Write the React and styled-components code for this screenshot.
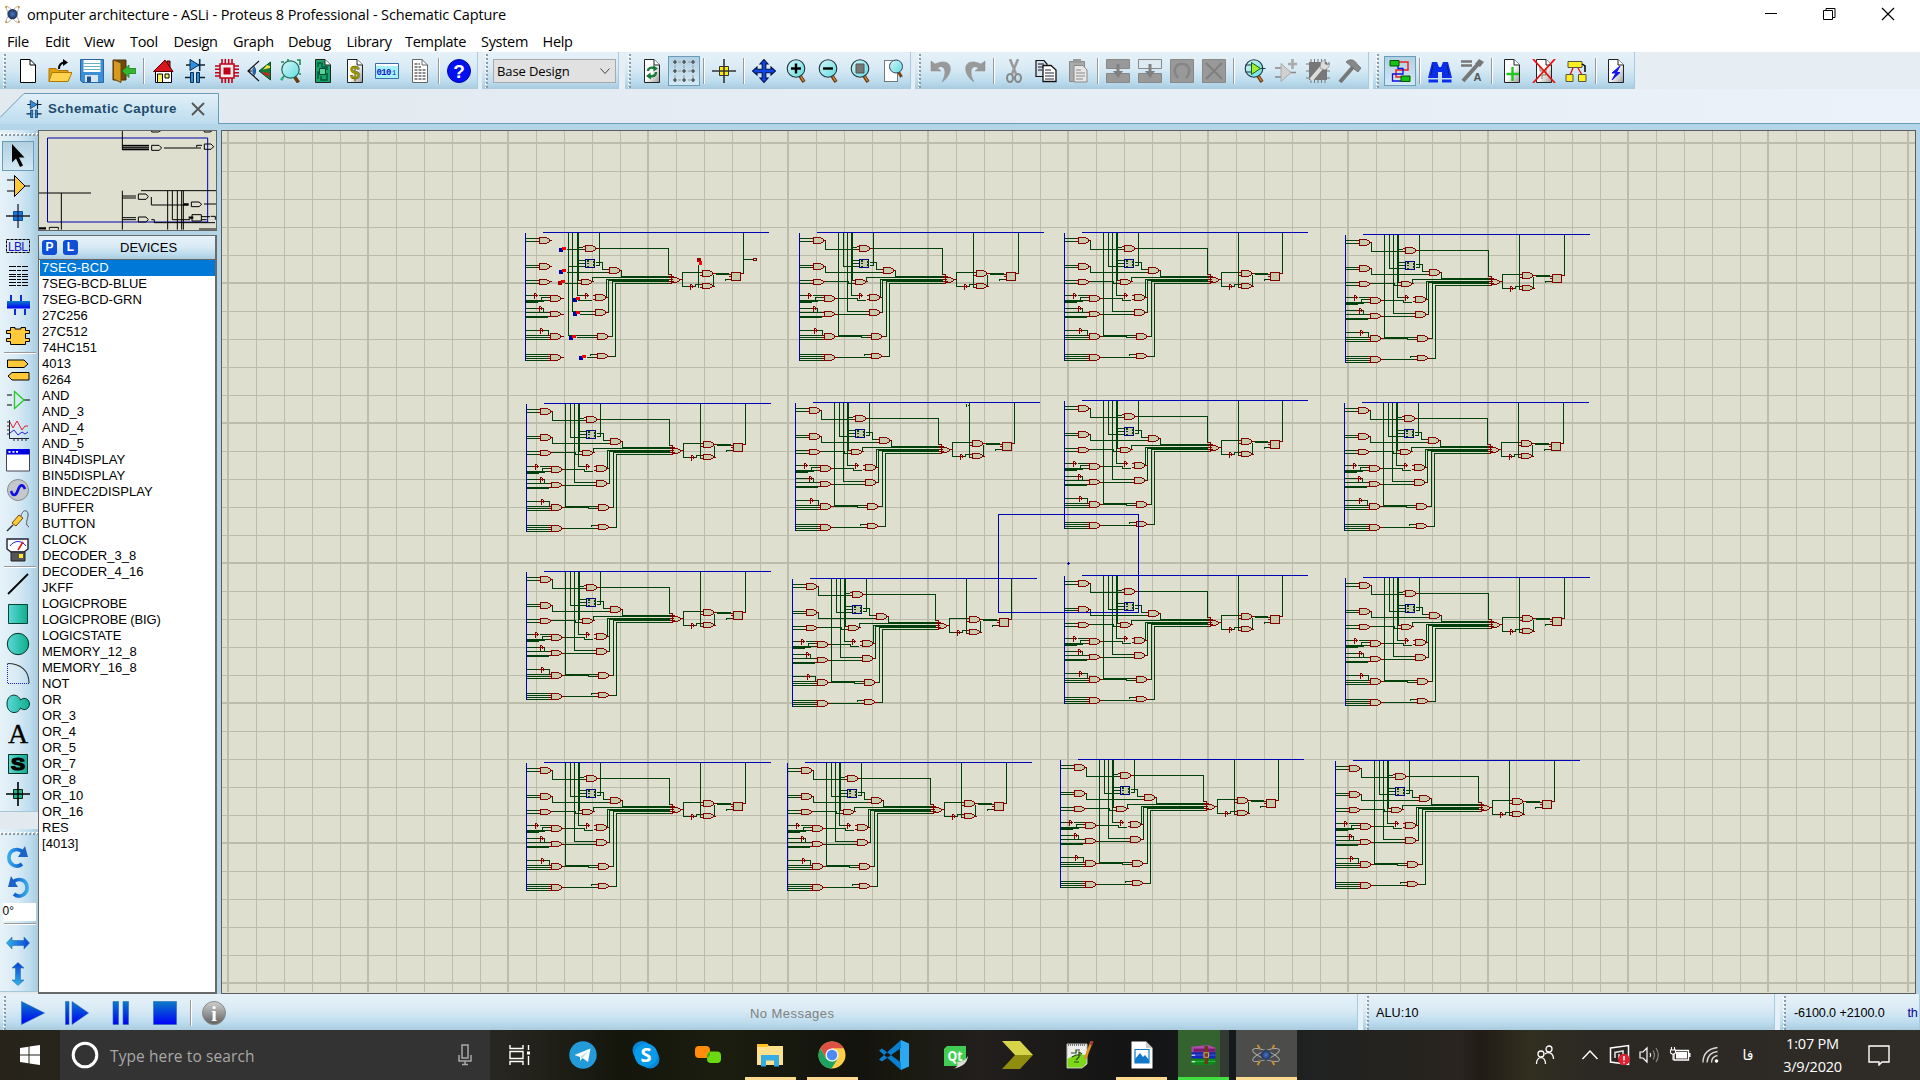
import React from 'react';
import styled, { createGlobalStyle, css } from 'styled-components';

const Global = createGlobalStyle`
  * { box-sizing: border-box; }
  body { margin: 0; background: #fff; overflow: hidden; }
  svg { display: block; flex: none; }
`;

const ui = `"Open Sans", "Noto Sans", sans-serif`;
const arial = `"Liberation Sans", Arial, sans-serif`;
const barFill = 'linear-gradient(#e6f2f8 0%, #d9eaf5 45%, #bcdcee 80%, #a9cbdd 100%)';

const Window = styled.div`
  width: 1920px;
  height: 1080px;
  display: flex;
  flex-direction: column;
  overflow: hidden;
  font-family: ${ui};
  color: #000;
  background: #fff;
`;

const TitleBar = styled.header`
  height: 28px;
  display: flex;
  align-items: center;
  padding: 0 4px 0 3px;
  gap: 5px;
`;
const Title = styled.div`
  flex: 1;
  font-size: 14.5px;
  letter-spacing: -0.13px;
  white-space: nowrap;
`;
const Controls = styled.div`
  display: flex;
  svg { width: 58px; height: 28px; }
`;

const MenuBar = styled.nav`
  height: 24px;
  display: flex;
  align-items: center;
  padding: 3px 0 0 7px;
  font-size: 14.5px;
  letter-spacing: -0.3px;
`;
const MenuItem = styled.span`
  width: ${(p) => p.$w}px;
  line-height: 20px;
`;

const ToolStrip = styled.div`
  height: 37px;
  display: flex;
  gap: 4px;
  background: #e6edf3;
`;
const Group = styled.div`
  width: ${(p) => p.$w}px;
  margin-right: ${(p) => p.$mr || 0}px;
  flex: none;
  display: flex;
  align-items: center;
  background: ${barFill};
  border-right: 1px solid #a5cbe0;
`;
const Handle = styled.i`
  width: ${(p) => p.$w || 12}px;
  height: 34px;
  flex: none;
  background:
    repeating-linear-gradient(#8d9ba5 0 2px, transparent 2px 4px) 4px 0 / 2px 100% no-repeat,
    repeating-linear-gradient(#fff 0 2px, transparent 2px 4px) 3px 1px / 2px 100% no-repeat;
`;
const ToolButton = styled.span`
  width: 32px;
  height: 30px;
  flex: none;
  display: flex;
  align-items: center;
  justify-content: center;
  ${(p) => p.$on && css`
    border: 1px solid #6a9db8;
    background: linear-gradient(#b2d0e2, #d3e8f4);
  `}
`;
const Sep = styled.i`
  width: ${(p) => p.$w || 8}px;
  height: 26px;
  flex: none;
  background:
    linear-gradient(#999, #999) 3px 0 / 1px 100% no-repeat,
    linear-gradient(#fff, #fff) 4px 0 / 1px 100% no-repeat;
`;
const Select = styled.div`
  width: 123px;
  height: 24px;
  border: 1px solid #a9a9a9;
  background: #e1e1e1;
  display: flex;
  align-items: center;
  justify-content: space-between;
  padding: 0 4px 0 3px;
  font-size: 13px;
  letter-spacing: -0.1px;
`;

const TabBar = styled.div`
  height: 35px;
  display: flex;
  align-items: flex-end;
  background: linear-gradient(90deg, #e2e9ef, #e6edf5 60%, #ebf2f9);
  border-bottom: 1px solid #6a9db8;
`;
const Tab = styled.div`
  position: relative;
  width: 219px;
  height: 31px;
  margin-bottom: -1px;
  display: flex;
  align-items: center;
  padding-left: 25px;
  gap: 5px;
  font: bold 13.3px ${arial};
  letter-spacing: 0.5px;
  color: #1f4c6b;
`;
const TabShape = styled.svg`
  position: absolute;
  left: 0;
  top: 0;
`;
const TabLabel = styled.span`
  position: relative;
  width: 138px;
  white-space: nowrap;
`;
const TabIcon = styled.span`
  position: relative;
`;

const Body = styled.main`
  flex: 1;
  min-height: 0;
  display: flex;
  background: #b4d5e8;
  padding-top: 6px;
`;
const LeftRail = styled.aside`
  width: 38px;
  flex: none;
  display: flex;
  flex-direction: column;
  background: #e2e9ef;
`;
const RailGroup = styled.div`
  height: ${(p) => p.$h}px;
  margin-bottom: ${(p) => p.$mb || 0}px;
  display: flex;
  flex-direction: column;
  align-items: center;
  background: linear-gradient(90deg, #e6f2f8 0%, #d9eaf5 45%, #bcdcee 80%, #a9cbdd 100%);
  border-bottom: 1px solid #a5c6d8;
`;
const RailHandle = styled.i`
  width: 38px;
  height: ${(p) => p.$h}px;
  flex: none;
  background:
    repeating-linear-gradient(90deg, #8d9ba5 0 2px, transparent 2px 4px) 1px 4px / 100% 2px no-repeat,
    repeating-linear-gradient(90deg, #fff 0 2px, transparent 2px 4px) 0 3px / 100% 2px no-repeat;
`;
const RailButton = styled.span`
  width: 32px;
  height: ${(p) => p.$h || 30}px;
  margin-right: 2px;
  flex: none;
  display: flex;
  align-items: center;
  justify-content: center;
  ${(p) => p.$on && css`
    border: 1px solid #6a9db8;
    background: linear-gradient(#b2d0e2, #d3e8f4);
  `}
`;
const RailLetter = styled.span`
  font: 28px/30px "Liberation Serif", serif;
  -webkit-text-stroke: 0.3px #000;
`;
const RailSep = styled.i`
  width: 32px;
  height: 4px;
  margin-left: 2px;
  flex: none;
  background: linear-gradient(#999 0 1px, #fff 1px 2px, transparent 2px) 0 1px no-repeat;
`;
const Angle = styled.div`
  width: 33px;
  height: 18px;
  margin: 1px 0;
  background: #fff;
  font: 12px/17px ${arial};
`;

const Side = styled.section`
  width: 179px;
  flex: none;
  display: flex;
  flex-direction: column;
  gap: 4px;
`;
const Overview = styled.div`
  height: 101px;
  background: #dfdfcf;
  border: 1px solid #646464;
  overflow: hidden;
`;
const Devices = styled.div`
  flex: 1;
  display: flex;
  flex-direction: column;
  background: #fff;
  border: 2px solid #6a6a6a;
  border-top-width: 1px;
  border-left-width: 1px;
`;
const DevHead = styled.div`
  height: 24px;
  display: flex;
  align-items: center;
  gap: 6px;
  padding-left: 3px;
  background: ${barFill};
  border-bottom: 1px solid #646464;
  font: 13px ${arial};
`;
const DevBadge = styled.b`
  width: 15px;
  height: 15px;
  border-radius: 3px;
  background: #0f4fd8;
  color: #fff;
  font: bold 12px/15px ${arial};
  text-align: center;
`;
const DevTitle = styled.span`
  flex: 1;
  padding-left: 36px;
`;
const DevList = styled.div`
  padding-left: 1px;
`;
const DevRow = styled.div`
  height: 16px;
  padding-left: 2px;
  font: 13px/16px ${arial};
  letter-spacing: ${(p) => (p.$long ? '-0.12px' : '0.02px')};
  white-space: nowrap;
  color: ${(p) => (p.$on ? '#fff' : '#000')};
  background: ${(p) => (p.$on ? '#0078d7' : 'transparent')};
`;

const Canvas = styled.section`
  width: 1695px;
  height: 864px;
  margin-left: 4px;
  flex: none;
  border: 1px solid #5d5d5d;
  background: #dfdfcf;
  overflow: hidden;
`;

const StatusBar = styled.footer`
  height: 36px;
  flex: none;
  display: flex;
  gap: 5px;
  background: #e6f0f6;
`;
const StatusPane = styled.div`
  width: ${(p) => p.$w}px;
  flex: none;
  display: flex;
  align-items: center;
  padding-top: 1px;
  background: ${barFill};
  border-right: 1px solid #a5cbe0;
  font: 12.6px ${arial};
  white-space: nowrap;
  overflow: hidden;
`;
const PlayButton = styled.span`
  width: 44px;
  display: flex;
  justify-content: center;
`;
const Message = styled.span`
  margin-left: ${(p) => p.$ml || 0}px;
  padding-top: 1px;
  color: ${(p) => p.$c || '#000'};
  font-size: ${(p) => p.$fs || 12.6}px;
  letter-spacing: ${(p) => p.$ls || 0}px;
`;

const TaskBar = styled.footer`
  height: 50px;
  flex: none;
  display: flex;
  background: linear-gradient(90deg, #27231a 0, #27251b 60px, #282620 500px, #14160c 620px, #1b1d0f 720px, #13130d 860px, #1a1a10 910px, #221f1d 980px, #141414 1120px, #15181a 1230px, #202221 1310px, #29241f 1460px, #211c15 1480px, #312f20 1530px, #2b2824 1600px, #302c28 1920px);
  color: #fff;
`;
const Start = styled.div`
  width: 60px;
  display: flex;
  align-items: center;
  justify-content: center;
`;
const Search = styled.div`
  width: 430px;
  display: flex;
  align-items: center;
  background: #333;
  padding: 0 18px 0 11px;
  font-size: 15.5px;
  letter-spacing: 0.1px;
  color: #a8a8a8;
`;
const SearchText = styled.span`
  flex: 1;
  padding: 1px 0 0 11px;
`;
const TaskItem = styled.div`
  position: relative;
  width: ${(p) => p.$w || 61.9}px;
  margin-left: ${(p) => p.$ml || 0}px;
  flex: none;
  display: flex;
  align-items: center;
  justify-content: center;
  background: ${(p) => p.$bg || 'transparent'};
  &::after {
    content: '';
    position: absolute;
    bottom: 0;
    left: ${(p) => (p.$full ? 0 : 5.5)}px;
    right: ${(p) => (p.$full ? 0 : 5.5)}px;
    height: 3px;
    background: ${(p) => p.$line || 'transparent'};
  }
`;
const Tray = styled.div`
  flex: 1;
  display: flex;
  align-items: center;
  padding-left: 233px;
`;
const TrayCell = styled.div`
  width: ${(p) => p.$w}px;
  flex: none;
  display: flex;
  justify-content: center;
  font: 14px "DejaVu Sans", sans-serif;
`;
const Clock = styled.div`
  width: 86px;
  text-align: center;
  font-size: 14.5px;
  line-height: 23px;
  letter-spacing: -0.2px;
`;
const HiddenDefs = styled.svg`
  position: absolute;
  width: 0;
  height: 0;
`;

/* ---------- icons ---------- */
const Svg = ({ s = 24, w, h, vb, children }) => (
  <svg width={w || s} height={h || s} viewBox={vb || '0 0 24 24'} fill="none">{children}</svg>
);
const PAGE = 'M4.5 .5H14L19.5 6V23.5H4.5Z';
const Page = ({ children, fill = 'url(#page)' }) => (
  <Svg><path d={PAGE} fill={fill} stroke="#222" /><path d="M14 .5V6H19.5" stroke="#222" fill="#fff" />{children}</Svg>
);
const Lens = ({ children }) => (
  <Svg>
    <g transform="translate(1.5 0)">
      <path d="M14 16L18.5 23" stroke="#6b3b10" strokeWidth="3.6" />
      <path d="M15 17L18 22" stroke="#e08a2c" strokeWidth="1.4" />
      <circle cx="10.5" cy="9.5" r="8.8" fill="url(#glass)" stroke="#234" strokeWidth="1.1" />
      {children}
    </g>
  </Svg>
);
const Parts = ({ s = 24 }) => (
  <Svg s={s}>
    <path d="M3 6H22M2 18.5H22" stroke="#123" strokeWidth="1.4" />
    <path d="M7 .5V11.5L16 6Z" fill="#2f8fe0" stroke="#0a2c50" />
    <path d="M16.7 0V12" stroke="#0a2c50" strokeWidth="1.6" />
    <path d="M7.5 13.5h3v10h-3zM13.5 13.5h3v10h-3z" fill="#2f8fe0" stroke="#0a2c50" />
    <path d="M11 14h2v9h-2z" fill="#cfe6f2" />
  </Svg>
);
const Atom = ({ s = 20, c = '#999' }) => (
  <Svg s={s}>
    <ellipse cx="12" cy="12" rx="13" ry="3.200" transform="rotate(52 12 12)" stroke={c} strokeWidth=".9" />
    <ellipse cx="12" cy="12" rx="13" ry="3.200" transform="rotate(-52 12 12)" stroke={c} strokeWidth=".9" />
    <circle cx="12" cy="11.500" r="6.500" fill="url(#atom)" />
    <circle cx="4" cy="2.500" r="1.300" fill="#c98d2b" /><circle cx="20" cy="2.500" r="1.300" fill="#c98d2b" />
    <circle cx="4" cy="21.500" r="1.300" fill="#c98d2b" /><circle cx="20" cy="21.500" r="1.300" fill="#c98d2b" />
  </Svg>
);
const AtomWide = () => (
  <Svg w={30} h={24} vb="0 0 32 26">
    <ellipse cx="16" cy="13" rx="15.500" ry="4.500" transform="rotate(22 16 13)" stroke="#aaa" strokeWidth="1.100" />
    <ellipse cx="16" cy="13" rx="15.500" ry="4.500" transform="rotate(-22 16 13)" stroke="#aaa" strokeWidth="1.100" />
    <circle cx="16" cy="13" r="5.500" fill="url(#atom)" />
    <path d="M7 2L9 6M25 2L23 6M7 24L9 20M25 24L23 20" stroke="#c98d2b" strokeWidth="2.200" />
  </Svg>
);

const NewFile = () => <Svg><path d={PAGE} fill="#fff" stroke="#000" /><path d="M14 .5V6H19.5" stroke="#000" /></Svg>;
const OpenFile = () => (
  <Svg><path d="M1 9.5H8L10 11.5H20V22.5H1Z" fill="#e0a010" stroke="#b07800" /><path d="M4 13.5H24L20 22.5H1Z" fill="#ffd34d" stroke="#b07800" />
    <path d="M11 10C11 5 13 3.500 17 3.500" stroke="#000" strokeWidth="2" /><path d="M15 0L20 3.500L15 7Z" fill="#000" /></Svg>
);
const Save = () => (
  <Svg><path d="M.5 .5H23.500V23.500H2.500L.5 21.500Z" fill="#3a8fd6" stroke="#2767a5" /><path d="M3.500 1H20.500V13H3.500Z" fill="#fff" />
    <path d="M3.500 4.500H20.500M3.500 7.500H20.500M3.500 10.500H20.500" stroke="#6bb2bc" /><path d="M5 16H18V23H5Z" fill="#d8e4ee" /><path d="M7 17.500H11V23H7Z" fill="#1d4f96" /></Svg>
);
const Exit = () => (
  <Svg><path d="M1 1H14V21H1Z" fill="#6b4a10" stroke="#4b3206" /><path d="M1.500 1L9 4V23.500L1.500 20Z" fill="#d9981e" stroke="#6b4706" />
    <path d="M10 12L17 6V9.500H24V14.500H17V18.500Z" fill="#35b733" stroke="#1d7d1c" strokeWidth=".8" /></Svg>
);
const Home = () => (
  <Svg><path d="M4.500 12H20.500V23.500H4.500Z" fill="#fff" stroke="#000" /><path d="M16 2H19V10H16Z" fill="#b22" stroke="#400" /><path d="M2.500 12.500L14 1L22 12.500Z" fill="#d8141c" stroke="#500" />
    <path d="M6.500 15H11.500V23.500H6.500Z" fill="#fff15a" stroke="#000" /><path d="M14 15H18V19H14Z" fill="#fff15a" stroke="#000" /></Svg>
);
const Pcb = () => (
  <Svg><path d="M7 0V24M10.300 0V24M13.700 0V24M17 0V24M0 7H24M0 10.300H24M0 13.700H24M0 17H24" stroke="#c00018" strokeWidth="1.6" />
    <path d="M5 5H19V19H5Z" fill="#f6eeee" stroke="#c00018" strokeWidth="1.500" /><path d="M8.500 8.500H15.500V15.500H8.500Z" fill="#c00018" /></Svg>
);
const Eye3d = () => (
  <Svg><path d="M12 2L1 12L12 22M1 12H5" stroke="#111" strokeWidth="1.200" /><path d="M6.500 7C9 10 9 14 6.500 17" fill="#3a8fd0" stroke="#111" />
    <ellipse cx="7" cy="12" rx="1.700" ry="3.500" fill="#2567b0" /><path d="M23.500 3V21L12 12Z" fill="#157a3a" stroke="#0a4a20" /><path d="M20 6L23 7V9L16 10.500Z" fill="#f4e13a" /><path d="M14 13L22 14V18Z" fill="#e01a1a" /></Svg>
);
const LensBoard = () => (
  <Svg><path d="M15 17L19.500 23.500" stroke="#6b3b10" strokeWidth="3.600" /><circle cx="11.500" cy="10.500" r="8.700" fill="url(#glass)" stroke="#1c6a56" strokeWidth="1.200" />
    <path d="M2 3H5M18 1H21V6M2 21L5 17M9 2V0M20 15H22" stroke="#1c8a56" strokeWidth="1.600" /><circle cx="3" cy="20" r="1.500" fill="#2b8" /></Svg>
);
const BoardPage = () => <Page fill="#18a463"><path d="M7 8V4H11V8H16V11M7 20V13H10M16 14V21H10V17" stroke="#054" strokeWidth="1.4" /><path d="M8.500 9.500H14.500V15.500H8.500Z" fill="#5bd29b" stroke="#043" /></Page>;
const Dollar = () => <Page><text x="12" y="20" fontSize="18" fontWeight="bold" textAnchor="middle" fill="#9a9a00" stroke="#555500" strokeWidth=".4" fontFamily="Liberation Sans">$</text></Page>;
const Binary = () => (
  <Svg><path d="M.5 4.500H23.500V19.500H.5Z" fill="#a6f2f6" stroke="#3a6ea8" /><path d="M1 5H23V7H1Z" fill="#fff" />
    <text x="1.500" y="15.500" fontSize="9" fontWeight="bold" fill="#1414d8" fontFamily="Liberation Mono" textLength="15">010</text><text x="17" y="15.500" fontSize="7" fill="#1414d8" fontFamily="Liberation Mono">1</text></Svg>
);
const TextPage = () => <Svg><g transform="translate(1 0)"><path d={PAGE} fill="#fff" stroke="#666" /><path d="M14 .5V6H19.500" stroke="#666" /><path d="M6.500 5H12M6.500 8H13M6.500 11H17.500M6.500 14H17.500M6.500 17H17.500M6.500 20H17.500" stroke="#666" strokeWidth="1.300" strokeDasharray="3 1" /></g></Svg>;
const Help = () => (
  <Svg><circle cx="12" cy="12" r="11.500" fill="#0010f0" stroke="#0008a0" /><text x="12" y="19" fontSize="19" fontWeight="bold" fill="#fff" textAnchor="middle" fontFamily="Liberation Sans">?</text></Svg>
);
const Refresh = () => <Page><path d="M8 12C8 9 11 8 14 9M16 13C16 17 12 18 9 17" stroke="#157a3a" strokeWidth="2.400" /><path d="M13 6L18 9.500L13.500 12.500ZM10.500 13.500L6 17L11 20.500Z" fill="#157a3a" /></Page>;
const GridIcon = () => (
  <Svg><path d="M1 3H23M1 12H23M1 21H23M3 1V23M12 1V23M21 1V23" stroke="#8c9aa4" strokeWidth="1" strokeDasharray="3 2" />
    {[3, 12, 21].map((x) => [3, 12, 21].map((y) => <path key={`${x}-${y}`} d={`M${x - 2} ${y}H${x + 2}M${x} ${y - 2}V${y + 2}`} stroke="#444" strokeWidth="1.200" />))}</Svg>
);
const Origin = () => <Svg><path d="M7.500 7.500H16.500V16.500H7.500Z" fill="#ffea00" stroke="#333" /><path d="M0 12H24M12 0V24" stroke="#333" strokeWidth="1.600" /></Svg>;
const Pan = () => <Svg><path d="M12 .5L16 5H13.800V10.200H19V8L23.500 12L19 16V13.800H13.800V19H16L12 23.500L8 19H10.200V13.800H5V16L.5 12L5 8V10.200H10.200V5H8Z" fill="#1245e8" stroke="#00104a" strokeWidth="1.100" /></Svg>;
const Plus = () => <Lens><path d="M10.500 4.500V14.500M5.500 9.500H15.500" stroke="#000" strokeWidth="2.400" /></Lens>;
const Minus = () => <Lens><path d="M5.500 9.500H15.500" stroke="#000" strokeWidth="2.400" /></Lens>;
const FitAll = () => <Lens><path d="M6.500 5H14.500V14H6.500Z" fill="#777" stroke="#555" /></Lens>;
const ZoomArea = () => (
  <Svg><g transform="translate(1 0)"><path d="M3.500 1.500H16.500V22.500H3.500Z" fill="#fff" stroke="#000" strokeDasharray="1 1" /><path d="M17.500 13L20.500 18" stroke="#7a4512" strokeWidth="3" /><circle cx="15" cy="7.500" r="6.500" fill="url(#glass)" stroke="#346" /></g></Svg>
);
const Undo = ({ flip }) => (
  <Svg><g transform={flip ? 'matrix(-1 0 0 1 24 0)' : ''}><path d="M1 2V12H11L7.500 9C14 4.500 18 12 12 23C25 14 23 -3 5 5Z" fill="#999" stroke="#888" strokeWidth=".5" /></g></Svg>
);
const Cut = () => <Svg><path d="M8 0L14 15M16 0L10 15" stroke="#9a9a9a" strokeWidth="2.500" /><ellipse cx="8" cy="19" rx="3" ry="4" stroke="#888" strokeWidth="2" /><ellipse cx="16" cy="19" rx="3" ry="4" stroke="#888" strokeWidth="2" /></Svg>;
const Copy = () => (
  <Svg><path d="M2 1.500H10L13 5V17.500H2Z" fill="#d7e3ec" stroke="#111" strokeWidth="1.200" /><path d="M4 5H10M4 8H10M4 11H8" stroke="#112" /><path d="M9 6.500H17L22 11V22.500H9Z" fill="#fff" stroke="#111" strokeWidth="1.300" /><path d="M11 11H17M11 14H20M11 17H20M11 20H20" stroke="#223" /></Svg>
);
const Paste = () => (
  <Svg><path d="M3.500 2.500H18.500V22.500H3.500Z" fill="#aaa" stroke="#888" /><path d="M7 0H15V4H7Z" fill="#999" /><path d="M8 6.500H17L21 11V23H8Z" fill="#e6e6e6" stroke="#888" /><path d="M10 11H15M10 14H19M10 17H19M10 20H17" stroke="#888" /></Svg>
);
const BlockOp = ({ k }) => (
  <Svg>
    {k < 2 && <><path d="M.5 .5H23.500V9.500H.5Z" fill={k === 0 ? '#999' : '#ddeaf2'} stroke="#888" /><path d="M.5 14.500H23.500V23.500H.5Z" fill="#999" stroke="#888" /><path d="M12 5V14" stroke="#808080" strokeWidth="3" /><path d="M7 12H17L12 19Z" fill="#808080" /></>}
    {k > 1 && <path d="M.5 .5H23.500V23.500H.5Z" fill="#999" stroke="#888" />}
    {k === 2 && <path d="M8 19C2 12 5 5 12 5C19 5 22 12 16 19" stroke="#858585" strokeWidth="2.500" />}
    {k === 3 && <path d="M4 4L20 20M20 4L4 20" stroke="#808080" strokeWidth="2.200" />}
  </Svg>
);
const PickLens = () => <Lens><path d="M2 6H8M2 13H8M15 9.500H22" stroke="#235" /><path d="M8 3.500V15.500L17 9.500Z" fill="#9fee30" stroke="#165a16" /></Lens>;
const MakeDev = () => <Svg><path d="M1 9H7M1 18H7M16 13.500H22" stroke="#888" strokeWidth="1.600" /><path d="M7 4.500V22.500L17 13.500Z" fill="#d0d0d0" stroke="#aaa" /><path d="M18.500 0V10M14 5H23" stroke="#aaa" strokeWidth="2.600" /></Svg>;
const Packaging = () => (
  <Svg><path d="M3 3H21V21H3Z" fill="#777" /><path d="M5 0V24M8.500 0V24M12 0V24M15.500 0V24M19 0V24M0 5H24M0 12H24M0 19H24" stroke="#777" strokeDasharray="3 18" /><path d="M5 21L16 8" stroke="#ddd" strokeWidth="4" /><path d="M14 9L15 3L19 1V5L22 6L23 3V8L19 11Z" fill="#ddd" stroke="#888" strokeWidth=".6" /></Svg>
);
const Hammer = () => <Svg><path d="M2 23L15 8" stroke="#777" strokeWidth="4" /><path d="M8 3C12 -1 17 1 19 5L23 9L20 13L16 10L14 8Z" fill="#888" stroke="#666" strokeWidth=".7" /></Svg>;
const WireAuto = () => (
  <Svg><path d="M11 3H20V11H8V18H13" stroke="#f02020" strokeWidth="1.500" /><path d="M10 6V9.500H15V15H4.500V22H13" stroke="#1010e0" strokeWidth="1.300" /><path d="M2 1.500H11V7H2ZM13 17H22V22.500H13Z" fill="#14c414" stroke="#065006" /></Svg>
);
const Binoc = () => <Svg><path d="M4 3H9L11 8H13L15 3H20L24 19H14V13H10V19H0Z" fill="#0b2fe8" /><path d="M.5 20.500H10V23.500H.5ZM14 20.500H23.500V23.500H14Z" fill="#0b2fe8" /><path d="M5 6L3 16M19 6L21 16" stroke="#0a1a90" /></Svg>;
const PropTool = () => <Svg><path d="M1 2.500H12M1 6.500H12" stroke="#777" strokeWidth="2.500" /><path d="M3 22L19 4" stroke="#777" strokeWidth="4" /><path d="M15 5L19 0L24 3L20 8Z" fill="#777" /><text x="17.500" y="21.500" fontSize="11" fontWeight="bold" fill="#555" textAnchor="middle" fontFamily="Liberation Sans">A</text></Svg>;
const AddSheet = () => <Page><path d="M12.500 8V22M6.500 15H19" stroke="#1fc81f" strokeWidth="2.400" /></Page>;
const DelSheet = () => <Page><path d="M8 8V12H12M14 9V16H10V20" stroke="#686" /><path d="M1 0L23 24M23 0L1 24" stroke="#e81010" strokeWidth="1.800" /></Page>;
const ChildSheet = () => (
  <Svg><path d="M9 9L6 16M14 9L18 16" stroke="#e81010" strokeWidth="1.400" /><path d="M4 2.500H18V8.500H4ZM2 15.500H9V22.500H2ZM14.500 15.500H22V22.500H14.500Z" fill="#ffee20" stroke="#554" /><path d="M18 5L21 7V13" stroke="#000" strokeWidth="1.500" /></Svg>
);
const Erc = () => <Page><path d="M16 7L8 14H12L8 21L16 13.500H12.500Z" fill="#1212e8" stroke="#1212e8" /></Page>;

/* left rail */
const rail1 = [
  <Svg><path d="M6 0V18.500L10 14.500L14 23L17 21.500L13 13.500H18.500Z" fill="#000" /></Svg>,
  <Svg><path d="M1 6H8M1 17H8M19 12H24" stroke="#000" /><path d="M8.500 1.500V22.500L19 12Z" fill="#ffc93a" stroke="#000" /></Svg>,
  <Svg><path d="M7.500 7.500H16.500V16.500H7.500Z" fill="#1279e0" stroke="#0a4fa0" /><path d="M0 12H24M12 0V24" stroke="#223" strokeWidth="1.300" /></Svg>,
  <Svg><path d="M.5 5.500H23.500V18.500H.5Z" stroke="#000" strokeDasharray="3 1" /><text x="2" y="16.500" fontSize="12" fill="#1414b8" fontFamily="Liberation Sans" textLength="20">LBL</text></Svg>,
  <Svg><path d="M3 2.500H22M3 6.500H22M3 10.500H22M3 12.500H22M3 15.500H22M3 18.500H22M3 21.500H22" stroke="#000" strokeWidth="1.100" strokeDasharray="7 1 4 1" /></Svg>,
  <Svg><path d="M5 1V7M15 1V7M9 15V21M19 15V21" stroke="#0a2fd0" strokeWidth="2" /><path d="M1 7H24V14.500H1Z" fill="url(#blue)" /></Svg>,
  <Svg><path d="M4.500 3.500H9V5H15V3.500H19.500V6.500H23.500V9.500H19.500V14.500H23.500V17.500H19.500V20.500H4.500V17.500H.5V14.500H4.500V9.500H.5V6.500H4.500Z" fill="#ffc93a" stroke="#000" /></Svg>,
];
const rail2 = [
  <Svg><path d="M1.500 2H18L22 6L18 9.500H1.500ZM23 14.500H6L2 18L6 22H23Z" fill="#ffc93a" stroke="#000" /></Svg>,
  <Svg><path d="M1 7H6M1 17H6M18 12H24" stroke="#000" /><path d="M8.500 3.500V20.500L18 12Z" stroke="#22cc22" strokeWidth="1.300" /></Svg>,
  <Svg><path d="M3.500 2V20.500H23M1 4H3M1 8H3M1 12H3M1 16H3M8 20V23M12 20V23M16 20V23M20 20V23" stroke="#223" /><path d="M4 4L7 10L11 3L16 12L19 8L22 8" stroke="#e02020" /><path d="M4 15L8 12L12 17L16 14L19 16L22 14" stroke="#2020d0" /></Svg>,
  <Svg><path d="M.5 1.500H23.500V23H.5Z" fill="#fff" stroke="#445" /><path d="M1 1H23.500V6.500H1Z" fill="#0000e8" /><path d="M2.500 3.800H4.500M6.500 3.800H8.500M10 3.800H12" stroke="#fff" strokeWidth="1.800" /></Svg>,
  <Svg><circle cx="12" cy="12" r="10.500" fill="#c4c8cc" stroke="#888" /><path d="M5 13C7 19 10 18 12 12C14 6 17 6 19 11" stroke="#1010e0" strokeWidth="2.600" /></Svg>,
  <Svg><path d="M1 23L7 17" stroke="#333" strokeWidth="1.500" /><path d="M6 15L13 7L17 10L10 18Z" fill="#ffc93a" stroke="#6b4a06" /><path d="M15 8C17 0 23 2 22 8C21 13 19 17 23 19" stroke="#555" /></Svg>,
  <Svg><path d="M1 1H22V11L18 14H5L1 11Z" fill="#fff" stroke="#223" strokeWidth="1.400" /><path d="M4 8C8 2 16 2 20 8" stroke="#2020d0" /><path d="M12 12L17 4" stroke="#e01010" strokeWidth="1.500" /><path d="M5 14H19V23H5Z" fill="#555" stroke="#222" /><path d="M13 16H17V20H13Z" fill="#ffe63a" /></Svg>,
];
const rail3 = [
  <Svg><path d="M2 22L22 2" stroke="#000" strokeWidth="1.800" /></Svg>,
  <Svg><path d="M2.500 2.500H21.500V21.500H2.500Z" fill="url(#teal)" stroke="#043" /></Svg>,
  <Svg><circle cx="12" cy="12" r="10.700" fill="url(#teal)" stroke="#032" /></Svg>,
  <Svg><path d="M1.500 2V21.500H23" stroke="#2020d0" strokeDasharray="1 1" /><path d="M1.500 1.500C14 1.500 23 8 23 21" stroke="#333" strokeWidth="1.200" /></Svg>,
  <Svg><path d="M14.500 8C12 1 1 1 1 12C1 22 12 23 14.500 16C19 20 23.500 16 23.500 12C23.500 8 19 4 14.500 8Z" fill="url(#teal)" stroke="#032" /></Svg>,
  <RailLetter>A</RailLetter>,
  <Svg><path d="M2.500 2.500H21.500V21.500H2.500Z" fill="url(#teal)" stroke="#032" /><text x="12" y="18" fontSize="16" fontWeight="bold" fill="#000" stroke="#000" strokeWidth="1.200" textAnchor="middle" textLength="14" lengthAdjust="spacingAndGlyphs" fontFamily="Liberation Sans">S</text></Svg>,
  <Svg><path d="M7.500 7.500H16.500V16.500H7.500Z" fill="#1bb58f" stroke="#021" /><path d="M0 12H24M12 0V24" stroke="#000" strokeWidth="1.600" /></Svg>,
];
const RotCw = ({ flip }) => <Svg><g transform={flip ? 'matrix(-1 0 0 1 24 0)' : ''}><path d="M16 19C10 24 2.500 19 3 12C3.500 5 11 2 17 7" stroke="url(#blue2)" strokeWidth="3.600" /><path d="M19 1L22 12H12Z" fill="#1a62c8" /></g></Svg>;
const ARROWS = 'M.5 12L6 6V9.500H18V6L23.500 12L18 18V14.500H6V18Z';
const FlipH = () => <Svg><path d={ARROWS} fill="url(#blueH)" stroke="#2570b0" strokeWidth=".6" /></Svg>;
const FlipV = () => <Svg><g transform="rotate(-90 12 12)"><path d={ARROWS} fill="url(#blueH)" stroke="#2570b0" strokeWidth=".6" /></g></Svg>;

/* ---------- schematic ---------- */
const GREEN = '#00400a';
const RED = '#800000';
const gate = (x, y, w, h) => `M${x} ${y}h${w - 3}l3 2v${h - 4}l-3 2h-${w - 3}z`;
const GATES = [
  [14, 5, 10, 6], [14, 31, 10, 6], [14, 47, 10, 5], [25, 63, 10, 6], [25, 79, 10, 5], [25, 101, 10, 6], [25, 122, 10, 6],
  [60, 13, 10, 6], [84, 35, 10, 6], [56, 47, 10, 5], [70, 62, 10, 6], [70, 77, 10, 6], [72, 101, 10, 6], [72, 121, 10, 5],
  [146, 45, 8, 5], [177, 38, 10, 6], [177, 51, 10, 5],
].map((g) => gate(...g)).join('');
const buffer = (x, y) => `M${x} ${y - 3}v6M${x + 1} ${y - 2}l2 2l-2 2M${x - 3} ${y}h6`;
const PINS = [
  'M11 6h3M11 9h3M24 8h2M11 33h3M11 35h3M24 34h2M11 48h3M11 51h3M24 49h2',
  'M22 63h3M22 65h3M22 68h3M35 66h3M22 80h3M22 84h3M35 82h3M22 103h3M22 105h3M22 107h3M35 104h3',
  'M22 122h3M22 124h3M22 126h3M22 128h3M35 125h3M57 14h3M57 17h3M70 16h3M81 37h3M81 40h3M94 38h2',
  'M53 48h3M53 51h3M66 49h2M67 63h3M67 67h3M67 79h3M67 82h3M69 103h3M69 105h3M69 122h3M69 125h3M80 65h2M80 80h2M82 104h3M82 124h3',
  'M143 42h3v9h-3M143 44h5M143 45h5M143 47h4M143 49h5M154 47h3M174 40h3M174 43h3M187 41h3M174 52h3M174 55h3M187 54h2',
  buffer(9, 63), buffer(14, 76), buffer(15, 98), buffer(60, 63), buffer(165, 54),
].join('');
const COMMON = [
  'M0 6h11M0 9h11M0 33h11M0 35h11M0 48h11M0 51h11',
  'M0 63h7M13 63h9M16 68v-3h6M0 68h22M0 69h18M0 70h12',
  'M0 76h11M17 76h1v4h4M0 80h22M0 84h22M0 85h22M0 98h12M18 98h5v4',
  'M0 103h22M0 105h22M0 107h22M0 122h22M0 124h22M0 126h22M0 128h22',
  'M73 16h70v26M70 30h7v7h5M70 33h4v-33M96 38v6h47M96 45h47M67 49v-4h76',
  'M81 65v-18h62M82 80h1v-32h60M85 104h2v-55h56M85 124h5v-73h53',
  'M157 47v-7h17M157 47v7h5M168 54h2v-2h4M188 54v-12',
  'M53 28h7M53 31h7M53 15h4M65 123v-1h4',
].join('');
const LINKS = [
  'M26 8v9h31M26 34v6h55M26 49h23v2h4M38 66h20v2h8v-1M38 82h29M38 104h24v1h7M38 125h31',
  'M39 0v103h30M44 0v34h16M48 0v79h19M52 0v63h6M53 0v48M174 0v55',
].join('');
const OPEN_LINKS = [
  'M41 17h16M41 40h40M39 51h14M52 68h14v-1M54 82h13M51 105h18M61 125h8',
  'M43 0v103h26M43 34h17M47 0v79h20M53 0v48M52 0v63h6M173 32v23M218 27h10',
].join('');
const IC_PINS = 'M61 28h2v1h-2M61 31h2M61 34h2v-1M67 29h2v1h-2M67 32h2v1h-2';
const STATES = [[34, 16], [34, 38], [33, 49, 1], [48, 66], [48, 80], [44, 104], [54, 124]];

const Circuit = ({ x, y, open, narrow }) => {
  const r = narrow ? -1 : 0;
  return (
    <g transform={`translate(${x + 0.5} ${y + 0.5})`} fill="none">
      <path d={COMMON + (open ? OPEN_LINKS : LINKS)} stroke={GREEN} />
      <path d={`M190 41H${204 + r}M190 42H${204 + r}M200 48v-1h${4 + r}M${219 + r} 40V0`} stroke={GREEN} />
      <path d={`M0 0V128M17 0H${244.5 + r}`} stroke="#0000b4" />
      <path d={`${GATES}M${207 + r} 40h9v8h-9z`} stroke={RED} fill="#c9c9ab" />
      <path d={`${PINS}M${204 + r} 42h3M${204 + r} 44h3M${204 + r} 47h3M${216 + r} 41h3v-1`} stroke={RED} />
      <path d="M60 27h9v8h-9z" stroke="#000080" fill="#c9c9ab" />
      <path d={IC_PINS} stroke={GREEN} />
      {open && STATES.map(([sx, sy, dark]) => (
        <g key={sy}>
          <path d={`M${sx - 0.5} ${sy - 0.5}h4v4h-4z`} fill={dark ? '#a00000' : '#0000a8'} />
          <path d={`M${sx + 2.5} ${sy - 1.5}h4v3h-4z`} fill="#f00000" />
        </g>
      ))}
      {open && <><path d="M171.500 25.500h4v4h-4z" fill="#a00000" /><path d="M173.500 28.500h3v4h-3z" fill="#f00" /><path d="M228 26h3v2h-3z" stroke={RED} /></>}
    </g>
  );
};

const BLOCKS = [
  [525, 232, 1], [799, 232], [1064, 232, 1], [1345, 234],
  [526, 403], [795, 402], [1064, 400, 1], [1344, 402],
  [526, 571], [792, 578], [1064, 575, 1], [1345, 577],
  [526, 762], [787, 762], [1060, 759, 1], [1335, 760],
];

const gridPaths = () => {
  let minor = '';
  let major = '';
  for (let i = 0, x = 228; x < 1916; x += 28, i += 1) {
    if (i % 5 === 0) major += `M${x} 131V992`;
    else minor += `M${x + 0.5} 131V992`;
  }
  for (let i = 0, y = 143; y < 992; y += 28, i += 1) {
    if (i % 5 === 0) major += `M222 ${y}H1916`;
    else minor += `M222 ${y + 0.5}H1916`;
  }
  return [minor, major];
};
const [MINOR, MAJOR] = gridPaths();

const Schematic = () => (
  <svg width="1693" height="862" viewBox="222 131 1693 862" shapeRendering="crispEdges" fill="none">
    <path d={MINOR} stroke="#bcbcad" />
    <path d={MAJOR} stroke="#bcbcad" strokeWidth="2" />
    {BLOCKS.map(([x, y, narrow], i) => <Circuit key={i} x={x} y={y} narrow={narrow} open={i === 0} />)}
    <path d="M998.500 514.500H1138.500V612.500H998.500Z" stroke="#0000b4" />
    <path d="M1068.500 562V565M1067 563.500H1070" stroke="#0000a0" />
    <path d="M966.500 404V407M967.500 405.500H969" stroke={GREEN} />
  </svg>
);

const Preview = () => (
  <svg width="177" height="99" viewBox="117 34 531 297" fill="none">
    <path d="M142.500 55H623V307H142.500Z" stroke="#0000b4" strokeWidth="3" />
    <g stroke="#000" strokeWidth="3">
      <path d="M367 31V90M367 84H447M367 90H447M492 85H603M590 83V77H606M117 220H273M184 220V330M367 213V330M367 229H408M367 235H408M423 213H648M454 232V256H565M612 253H648M503 213V330M517 213V300H570M532 213V330M545 213V330M550 213V330M367 294H408M367 300H408M454 300H463V309H645M597 328H648" />
      <path d="M367 78H447" strokeWidth="5" /><path d="M367 89H447" strokeWidth="5" />
      <path d="M455 77H477L485 85L477 92H455ZM613 73H633L641 81L633 89H613ZM415 223H438L445 231L438 239H415ZM574 247H597L605 254L597 261H574ZM415 292H438L445 300L438 307H415ZM455 31V37H475L484 32M613 31V37H630L638 32M576 285H604V304H576ZM148 330V323H175V330M604 291H630M604 300H620M632 290H646V300" />
      <path d="M550 254H566M117 326H138M566 294H580" strokeWidth="7" />
    </g>
  </svg>
);

const DEVICES = ['7SEG-BCD', '7SEG-BCD-BLUE', '7SEG-BCD-GRN', '27C256', '27C512', '74HC151', '4013', '6264', 'AND', 'AND_3', 'AND_4', 'AND_5', 'BIN4DISPLAY', 'BIN5DISPLAY', 'BINDEC2DISPLAY', 'BUFFER', 'BUTTON', 'CLOCK', 'DECODER_3_8', 'DECODER_4_16', 'JKFF', 'LOGICPROBE', 'LOGICPROBE (BIG)', 'LOGICSTATE', 'MEMORY_12_8', 'MEMORY_16_8', 'NOT', 'OR', 'OR_3', 'OR_4', 'OR_5', 'OR_7', 'OR_8', 'OR_10', 'OR_16', 'RES', '[4013]'];
const MENU = [['File', 38], ['Edit', 39], ['View', 46], ['Tool', 43.5], ['Design', 59.5], ['Graph', 55], ['Debug', 58.5], ['Library', 58.5], ['Template', 76], ['System', 61.5], ['Help', 40]];

const Tools = ({ items }) => items.map((it, i) => {
  if (typeof it === 'number') return <Sep key={i} $w={it} />;
  const on = Array.isArray(it);
  const Icon = on ? it[0] : it;
  return <ToolButton key={i} $on={on}><Icon /></ToolButton>;
});

const Op0 = () => <BlockOp k={0} />;
const Op1 = () => <BlockOp k={1} />;
const Op2 = () => <BlockOp k={2} />;
const Op3 = () => <BlockOp k={3} />;
const Redo = () => <Undo flip />;

/* ---------- taskbar icons ---------- */
const WinLogo = () => <Svg s={20} vb="0 0 20 20"><path d="M0 3L8.500 1.800V9.500H0ZM9.500 1.600L20 0V9.500H9.500ZM0 10.500H8.500V18.200L0 17ZM9.500 10.500H20V20L9.500 18.400Z" fill="#fff" /></Svg>;
const TaskView = () => <Svg s={22} vb="0 0 22 22"><path d="M1 1V4.500H14V1M1 21V17.500H14V21M1 7.500H14V14.500H1ZM19.500 1V6M19.500 12V21" stroke="#fff" strokeWidth="1.400" /><path d="M18 7.500H21V10.500H18Z" fill="#fff" /></Svg>;
const Telegram = () => <Svg s={28} vb="0 0 28 28"><circle cx="14" cy="14" r="13.700" fill="#239bd8" /><path d="M5.500 14L21.500 7.500L19 21L13.500 17L11 20V16Z" fill="#fff" /><path d="M11 16L19 10L13.500 17" fill="#c3ddec" /></Svg>;
const Skype = () => <Svg s={28} vb="0 0 28 28"><circle cx="10" cy="9.500" r="9.500" fill="#0a86d8" /><circle cx="18" cy="18" r="9.500" fill="#0a86d8" /><circle cx="14" cy="14" r="11.500" fill="#0a9be8" /><text x="14" y="21" fontSize="20" fontWeight="bold" fill="#fff" textAnchor="middle" fontFamily="Open Sans">S</text></Svg>;
const Blobs = () => <Svg w={28} h={20} vb="0 0 28 20"><rect x="1" y="1" width="15" height="12" rx="4" fill="#ff8c0a" /><rect x="13" y="6.500" width="14" height="11.500" rx="4" fill="#6ada10" /><path d="M13 10Q14 7 16 6.700V10Q15 13 13 13Z" fill="#46a80a" /></Svg>;
const Explorer = () => <Svg w={28} h={24} vb="0 0 28 24"><path d="M1 1H11L13 3H27V22H1Z" fill="#ffe08c" /><path d="M1 1H12V4H1Z" fill="#ffc21e" /><path d="M5 12H23V23.500H18V17.500H10V23.500H5Z" fill="#35ace4" /></Svg>;
const Chrome = () => (
  <Svg s={28} vb="0 0 28 28"><circle cx="14" cy="14" r="13.500" fill="#ffcf48" /><path d="M2.300 7.200A13.500 13.500 0 0 1 25.700 7.200H14L8 17.500Z" fill="#dd5144" /><path d="M2.300 7.200L8 17.500L14 20.700L11.500 27.300A13.500 13.500 0 0 1 2.300 7.200Z" fill="#1ca261" /><path d="M8 17.500L14 20.700L20 17.200L13.500 27.500L11.500 27.300Z" fill="#1ca261" />
    <circle cx="14" cy="14" r="6.600" fill="#f1f1f1" /><circle cx="14" cy="14" r="5.200" fill="#4c8bf5" /></Svg>
);
const VsCode = () => <Svg s={30} vb="0 0 30 30"><path d="M22 0L30 3.500V26.500L22 30L21 21V9Z" fill="#2aa8f2" /><path d="M0 10.500L3 8.500L22 22.500V30ZM0 19.500L3 21.500L22 8V0Z" fill="#0b7fcf" /></Svg>;
const Qt = () => <Svg w={26} h={28} vb="0 0 26 28"><path d="M4 5H23V20L18 25H1V8Z" fill="#41cd52" /><text x="12" y="19.500" fontSize="14" fill="#fff" fontWeight="bold" textAnchor="middle" textLength="15" lengthAdjust="spacingAndGlyphs" fontFamily="Open Sans">Qt</text><path d="M25 15Q24 25 11 27.500Q16 25 14 21Q22 21 25 15Z" fill="#ddd" /></Svg>;
const Chev = () => <Svg w={31} h={28} vb="0 0 31 28"><path d="M0 0H18L31 14H13Z" fill="#d8d44a" /><path d="M13 14H31L18 28H0Z" fill="#908c0e" /></Svg>;
const Notepad = () => <Svg w={28} h={28} vb="0 0 28 28"><path d="M1 3H21V23L16 27H1Z" fill="#eee" stroke="#bbb" /><path d="M1.500 18Q10 12 20.500 14V22.500L16 26.500H1.500Z" fill="#7ed81a" /><path d="M2 4H20" stroke="#777" strokeDasharray="1 1" strokeWidth="2" /><path d="M5 12H10V9H14M6 16L10 14H15M10 19L13 16V11L16 13M8 21H13" stroke="#284a14" strokeWidth="1.200" /><path d="M26 0L19 18" stroke="#e0901c" strokeWidth="2.600" /><path d="M26.500 0L25 4" stroke="#a03a2c" strokeWidth="2.600" /></Svg>;
const Photo = () => <Svg w={22} h={28} vb="0 0 22 28"><path d="M.5 .5H15L21.500 7V27.500H.5Z" fill="#fff" /><path d="M15 .5V7H21.500" fill="#ccc" /><path d="M4 8.500H18V22H4Z" fill="#fff" stroke="#1278c8" strokeWidth="1.200" /><path d="M4 22V18L9 12L12 16L14 14L18 19V22Z" fill="#1278c8" /></Svg>;
const WinRar = () => (
  <Svg w={27} h={22} vb="0 0 28 24">
    <path d="M1 3L19 1L27 4V9H1Z" fill="#b04aa8" /><path d="M3 5H27V8.500H3Z" fill="#7a1c74" />
    <path d="M1 9H27V16H1Z" fill="#1626b8" /><path d="M1 11.500H5V13H1Z" fill="#c8d4f4" /><path d="M5 11.500H27V12.500H5Z" fill="#4a62d8" />
    <path d="M1 16H27V21L22 23H3Z" fill="#0c8a1c" /><path d="M1 18.500H5V20H1Z" fill="#c8f0c8" /><path d="M5 18.500H27V19.500H5Z" fill="#38b848" />
    <path d="M15 2H19V22H15Z" fill="#6b3a1c" /><path d="M14.500 9.500H19.500V14.500H14.500Z" stroke="#d8a838" strokeWidth="1.200" />
  </Svg>
);
const Mic = () => <Svg w={14} h={22} vb="0 0 14 22"><path d="M4 1H10V14H4ZM1 11V17H13V11M7 17V20M4 20.500H10" stroke="#a8a8a8" strokeWidth="1.500" /></Svg>;

const People = () => <Svg s={20} vb="0 0 20 20"><circle cx="6" cy="9" r="3" stroke="#fff" strokeWidth="1.300" /><circle cx="14" cy="4" r="3" stroke="#fff" strokeWidth="1.300" /><path d="M1.500 19C1.500 10.500 10.500 10.500 10.500 19M10 9C13 6 18.500 8 18.500 14" stroke="#fff" strokeWidth="1.300" /></Svg>;
const Up = () => <Svg w={18} h={12} vb="0 0 18 12"><path d="M1.500 10L9 2L16.500 10" stroke="#fff" strokeWidth="1.400" /></Svg>;
const Update = () => <Svg s={22} vb="0 0 22 22"><path d="M1.500 4L19.500 1.500V20.500L1.500 18Z" stroke="#fff" strokeWidth="1.500" /><path d="M6 14V8.500L14 7V14H10V10" stroke="#ddd" strokeWidth="1.600" /><circle cx="15" cy="15.500" r="5.800" fill="#e02030" /><path d="M15 12V16.500M15 18V19.200" stroke="#fff" strokeWidth="1.500" /></Svg>;
const Volume = () => <Svg w={22} h={18} vb="0 0 22 18"><path d="M1 6H4L8 2V16L4 12H1ZM11 7Q12.500 9 11 11" stroke="#fff" strokeWidth="1.200" /><path d="M14 4.500Q17 9 14 13.500M17 2Q21.500 9 17 16" stroke="#888" strokeWidth="1.200" /></Svg>;
const Battery = () => <Svg w={22} h={16} vb="0 0 22 16"><path d="M5 3.500H19.500V13H5Z" stroke="#fff" strokeWidth="1.300" /><path d="M7 5H18V11.500H7ZM20 6H21.500V10H20Z" fill="#fff" /><path d="M2.500 0V3M5.500 0V3M1.500 3H6.500V6L4 7.500L1.500 6ZM4 7.500V13" stroke="#fff" strokeWidth="1.100" fill="#2b2824" /></Svg>;
const Wifi = () => <Svg s={18} vb="0 0 18 18"><circle cx="14.500" cy="15" r="1.800" fill="#fff" /><path d="M9.500 16.500Q9.500 10.500 15.500 9.500M5 16.500Q5.500 6.500 15.500 5.500M1 16.500Q1 3.500 15.500 1.500" stroke="#d8d8d8" strokeWidth="1.400" /></Svg>;
const Notif = () => <Svg s={22} vb="0 0 22 22"><path d="M1 2H21V18H14L11 21V18H1Z" stroke="#fff" strokeWidth="1.400" /></Svg>;

export default function App() {
  return (
    <Window>
      <Global />
      <HiddenDefs>
        <defs>
          <linearGradient id="page" x1="0" y1="0" x2="1" y2="1"><stop offset=".5" stopColor="#fff" /><stop offset="1" stopColor="#999" /></linearGradient>
          <linearGradient id="glass" x1="0" y1="0" x2="1" y2="1"><stop offset="0" stopColor="#d8f6f8" /><stop offset="1" stopColor="#5fdde0" /></linearGradient>
          <linearGradient id="teal"><stop offset="0" stopColor="#5cd8d8" /><stop offset="1" stopColor="#0fae8c" /></linearGradient>
          <linearGradient id="blue" x1="0" y1="0" x2="0" y2="1"><stop offset="0" stopColor="#0a7ac8" /><stop offset="1" stopColor="#0000f8" /></linearGradient>
          <linearGradient id="blue2"><stop offset="0" stopColor="#38a8e8" /><stop offset="1" stopColor="#0a58d0" /></linearGradient>
          <linearGradient id="blueH"><stop offset="0" stopColor="#2fb4e8" /><stop offset="1" stopColor="#0a40d8" /></linearGradient>
          <linearGradient id="grey" x1="0" y1="0" x2="0" y2="1"><stop offset="0" stopColor="#d0d0d0" /><stop offset="1" stopColor="#606060" /></linearGradient>
          <linearGradient id="tab" x1="0" y1="0" x2="0" y2="1"><stop offset="0" stopColor="#e2f0f8" /><stop offset="1" stopColor="#bcdcee" /></linearGradient>
          <radialGradient id="atom"><stop offset="0" stopColor="#4a78c8" /><stop offset="1" stopColor="#1c2c50" /></radialGradient>
        </defs>
      </HiddenDefs>
      <TitleBar>
        <Atom s={19} />
        <Title>omputer architecture - ASLi - Proteus 8 Professional - Schematic Capture</Title>
        <Controls>
          <svg viewBox="0 0 58 28"><path d="M23 13.500H35" stroke="#000" /></svg>
          <svg viewBox="0 0 58 28"><path d="M23.500 10.500H32.500V19.500H23.500ZM26 10V8.500H35V17.500H33" stroke="#000" fill="none" /></svg>
          <svg viewBox="0 0 58 28"><path d="M24 8L36 20M36 8L24 20" stroke="#000" strokeWidth="1.200" /></svg>
        </Controls>
      </TitleBar>
      <MenuBar>{MENU.map(([t, w]) => <MenuItem key={t} $w={w}>{t}</MenuItem>)}</MenuBar>
      <ToolStrip>
        <Group $w={478}><Handle /><Tools items={[NewFile, OpenFile, Save, Exit, 7, Home, Parts, Pcb, Eye3d, LensBoard, BoardPage, Dollar, Binary, TextPage, 8, Help]} /></Group>
        <Group $w={137} $mr={2}>
          <Handle $w={11} />
          <Select>Base Design<Svg w={12} h={12} vb="0 0 12 12"><path d="M1.500 3.500L6 8.500L10.500 3.500" stroke="#444" /></Svg></Select>
        </Group>
        <Group $w={286}><Handle $w={11} /><Tools items={[Refresh, [GridIcon], 8, Origin, 8, Pan, Plus, Minus, FitAll, ZoomArea]} /></Group>
        <Group $w={454}><Handle $w={11} /><Tools items={[Undo, Redo, 8, Cut, Copy, Paste, 8, Op0, Op1, Op2, Op3, 8, PickLens, MakeDev, Packaging, Hammer]} /></Group>
        <Group $w={262}><Handle $w={11} /><Tools items={[[WireAuto], 8, Binoc, PropTool, 8, AddSheet, DelSheet, ChildSheet, 8, Erc]} /></Group>
      </ToolStrip>
      <TabBar>
        <Tab>
          <TabShape width="219" height="31" viewBox="0 0 219 31"><path d="M0 24.500L24 .5H218.500V31H0Z" fill="url(#tab)" /><path d="M0 24.500L24 .5H218.500V31" fill="none" stroke="#6a9db8" /></TabShape>
          <TabIcon><Parts s={18} /></TabIcon>
          <TabLabel>Schematic Capture</TabLabel>
          <TabIcon><Svg s={14} vb="0 0 14 14"><path d="M1 1L13 13M13 1L1 13" stroke="#555" strokeWidth="1.800" /></Svg></TabIcon>
        </Tab>
      </TabBar>
      <Body>
        <LeftRail>
          <RailGroup $h={682} $mb={17}>
            <RailHandle $h={11} />
            {rail1.map((ic, i) => <RailButton key={i} $on={i === 0}>{ic}</RailButton>)}
            <RailSep />
            {rail2.map((ic, i) => <RailButton key={i}>{ic}</RailButton>)}
            <RailSep />
            {rail3.map((ic, i) => <RailButton key={i}>{ic}</RailButton>)}
          </RailGroup>
          <RailGroup $h={163}>
            <RailHandle $h={13} />
            <RailButton><RotCw /></RailButton>
            <RailButton><RotCw flip /></RailButton>
            <Angle>0°</Angle>
            <RailSep />
            <RailButton $h={34}><FlipH /></RailButton>
            <RailButton $h={27}><FlipV /></RailButton>
          </RailGroup>
        </LeftRail>
        <Side>
          <Overview><Preview /></Overview>
          <Devices>
            <DevHead><DevBadge>P</DevBadge><DevBadge>L</DevBadge><DevTitle>DEVICES</DevTitle></DevHead>
            <DevList>
              {DEVICES.map((d, i) => <DevRow key={d} $on={i === 0} $long={d.startsWith('LOGIC')}>{d}</DevRow>)}
            </DevList>
          </Devices>
        </Side>
        <Canvas><Schematic /></Canvas>
      </Body>
      <StatusBar>
        <StatusPane $w={1358}>
          <Handle $w={11} />
          <PlayButton><Svg><path d="M.5 .5V23.500L23.500 12Z" fill="url(#blue)" stroke="#2a6ab0" strokeWidth=".6" /></Svg></PlayButton>
          <PlayButton><Svg><path d="M.5 .5H4V23.500H.5ZM7 .5V23.500L23.500 12Z" fill="url(#blue)" stroke="#2a6ab0" strokeWidth=".6" /></Svg></PlayButton>
          <PlayButton><Svg><path d="M4 .5H9.500V23.500H4ZM14 .5H19.500V23.500H14Z" fill="url(#blue)" stroke="#2a6ab0" strokeWidth=".6" /></Svg></PlayButton>
          <PlayButton><Svg><path d="M.5 .5H23.500V23.500H.5Z" fill="url(#blue)" stroke="#2a6ab0" strokeWidth=".6" /></Svg></PlayButton>
          <Sep $w={15} />
          <Svg><circle cx="12" cy="12" r="11.500" fill="url(#grey)" stroke="#888" /><text x="12" y="19.500" fontSize="20" fontWeight="bold" fill="#fff" textAnchor="middle" fontFamily="Liberation Serif">i</text></Svg>
          <Message $ml={524} $c="#808080" $fs={13} $ls={0.45}>No Messages</Message>
        </StatusPane>
        <StatusPane $w={412}><Handle $w={13} /><Message $ls={0.1}>ALU:10</Message></StatusPane>
        <StatusPane $w={140}><Handle $w={14} /><Message $ls={-0.1}>-6100.0 +2100.0</Message><Message $ml={23} $c="#0000a0" $ls={-0.3}>th</Message></StatusPane>
      </StatusBar>
      <TaskBar>
        <Start><WinLogo /></Start>
        <Search>
          <Svg s={28} vb="0 0 28 28"><circle cx="14" cy="14" r="11.800" stroke="#fff" strokeWidth="3" /></Svg>
          <SearchText>Type here to search</SearchText>
          <Mic />
        </Search>
        <TaskItem $w={60}><TaskView /></TaskItem>
        <TaskItem $w={65.5}><Telegram /></TaskItem>
        <TaskItem><Skype /></TaskItem>
        <TaskItem><Blobs /></TaskItem>
        <TaskItem $line="#fbd98e"><Explorer /></TaskItem>
        <TaskItem $line="#fbd98e"><Chrome /></TaskItem>
        <TaskItem><VsCode /></TaskItem>
        <TaskItem><Qt /></TaskItem>
        <TaskItem><Chev /></TaskItem>
        <TaskItem><Notepad /></TaskItem>
        <TaskItem $line="#fbd98e"><Photo /></TaskItem>
        <TaskItem $w={62} $line="#3fe03f" $bg="linear-gradient(90deg, transparent 5px, #35632f 5px 47px, #333a33 47px 56px, transparent 56px)"><WinRar /></TaskItem>
        <TaskItem $full $w={61} $ml={1} $line="#fbd98e" $bg="#4c4c4a"><AtomWide /></TaskItem>
        <Tray>
          <TrayCell $w={30}><People /></TrayCell>
          <TrayCell $w={60}><Up /></TrayCell>
          <TrayCell $w={1}><Update /></TrayCell>
          <TrayCell $w={59}><Volume /></TrayCell>
          <TrayCell $w={1}><Battery /></TrayCell>
          <TrayCell $w={60}><Wifi /></TrayCell>
          <TrayCell $w={15}>فا</TrayCell>
          <TrayCell $w={14} />
          <Clock>1:07 PM<br />3/9/2020</Clock>
          <TrayCell $w={46}><Notif /></TrayCell>
        </Tray>
      </TaskBar>
    </Window>
  );
}
